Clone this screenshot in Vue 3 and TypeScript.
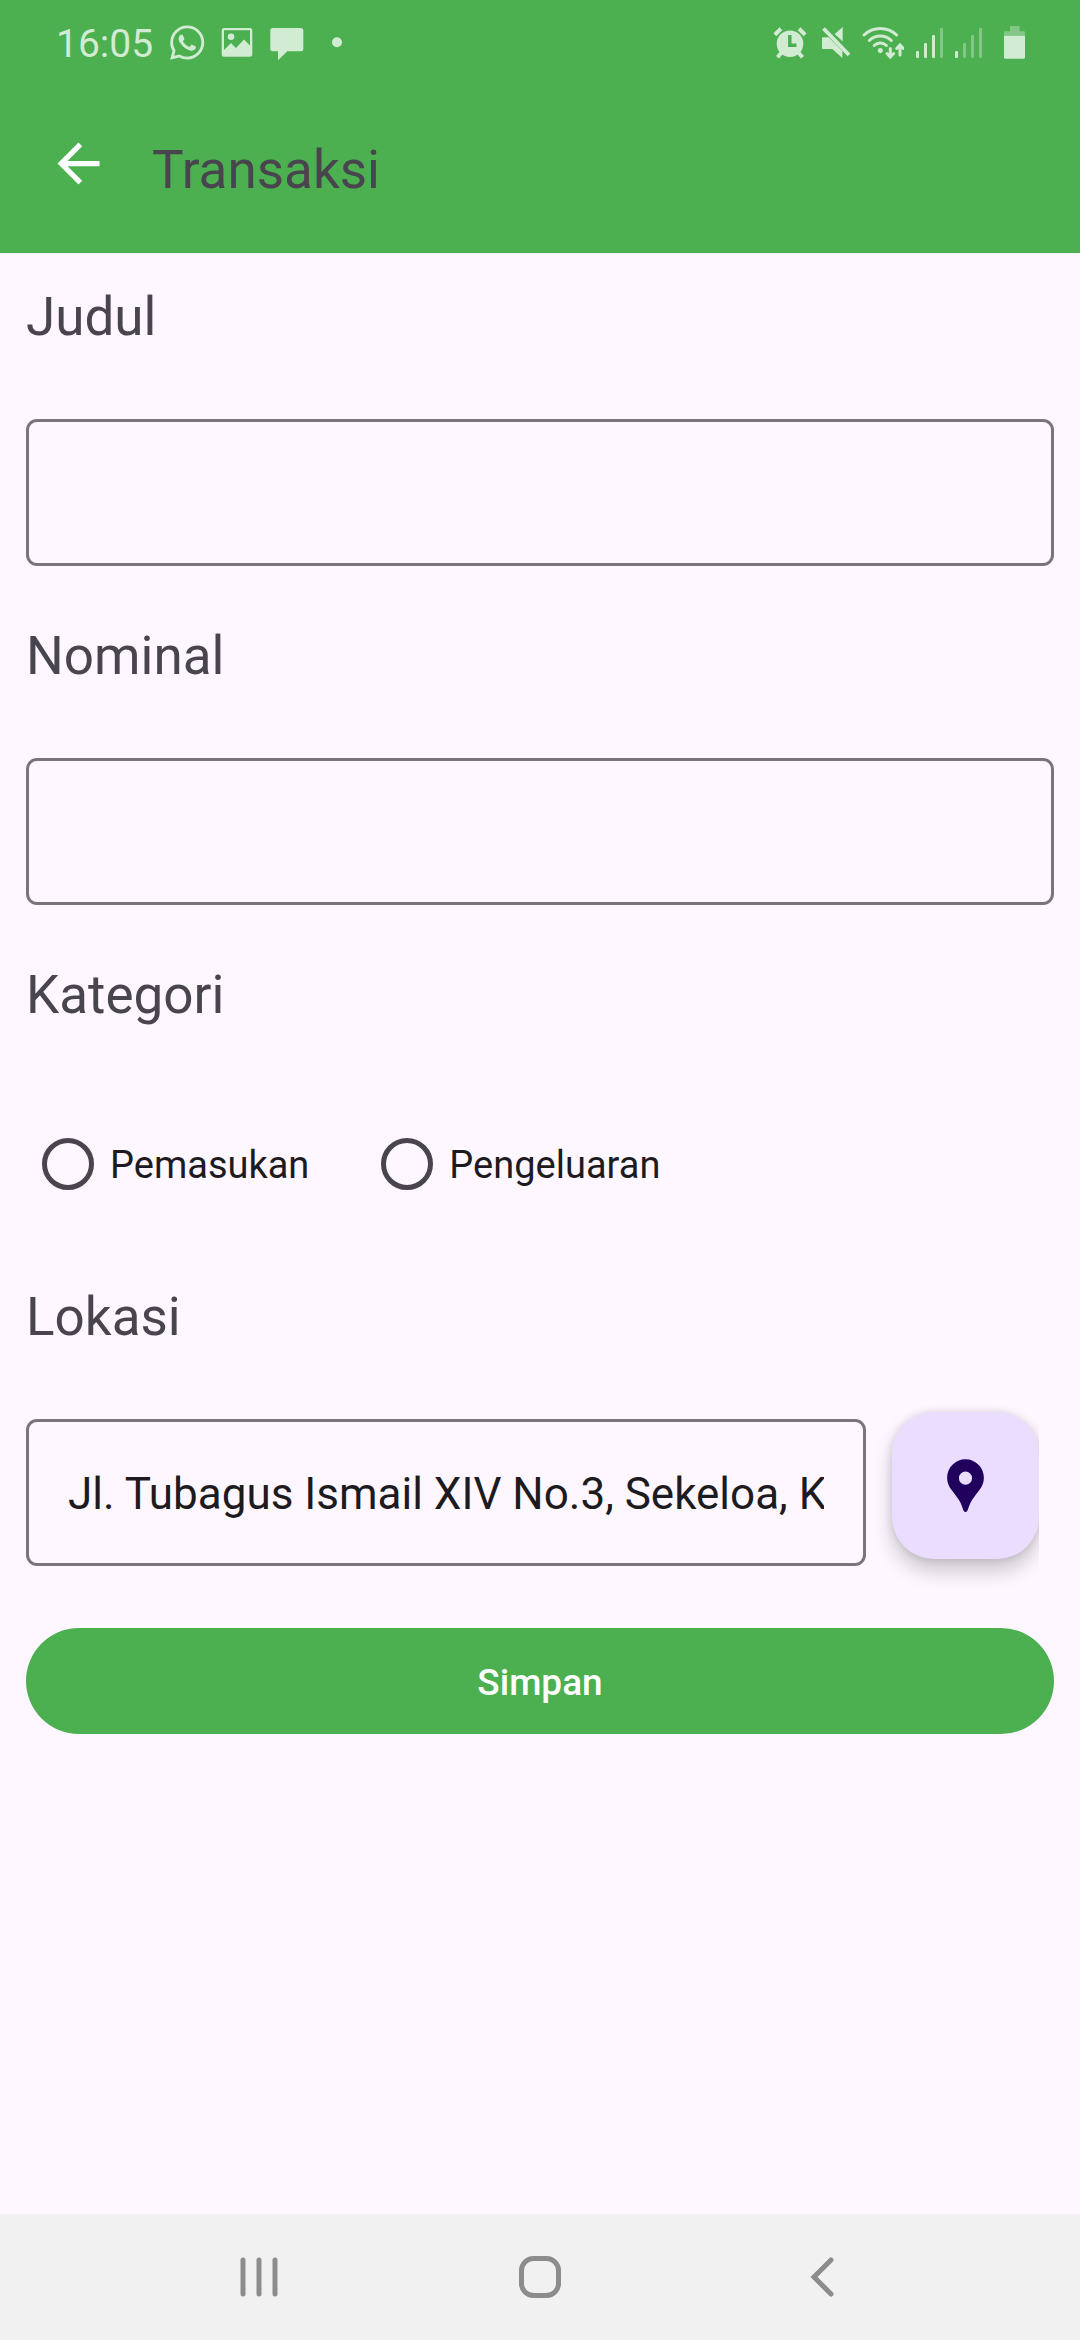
<script setup lang="ts">
import { ref } from 'vue'

type Category = 'pemasukan' | 'pengeluaran'

const title = ref('')
const amount = ref('')
const category = ref<Category | null>(null)
const location = ref('Jl. Tubagus Ismail XIV No.3, Sekeloa, K')

const categories: { value: Category; label: string }[] = [
  { value: 'pemasukan', label: 'Pemasukan' },
  { value: 'pengeluaran', label: 'Pengeluaran' },
]

const signalBars = [
  { x: 0, y: 29 },
  { x: 8, y: 21 },
  { x: 16, y: 13 },
  { x: 24, y: 6 },
]
const signalLevels = [3, 1]
</script>

<template>
  <div class="screen">
    <header class="header">
      <div class="status">
        <span class="clock">16:05</span>
        <svg width="36" height="40" viewBox="0 0 36 40" aria-hidden="true">
          <path
            transform="translate(1 3.5) scale(1.43)"
            d="M17.472 14.382c-.297-.149-1.758-.867-2.03-.967-.273-.099-.471-.148-.67.15-.197.297-.767.966-.94 1.164-.173.199-.347.223-.644.075-.297-.15-1.255-.463-2.39-1.475-.883-.788-1.48-1.761-1.653-2.059-.173-.297-.018-.458.13-.606.134-.133.298-.347.446-.52.149-.174.198-.298.298-.497.099-.198.05-.371-.025-.52-.075-.149-.669-1.612-.916-2.207-.242-.579-.487-.5-.669-.51-.173-.008-.371-.01-.57-.01-.198 0-.52.074-.792.372-.272.297-1.04 1.016-1.04 2.479 0 1.462 1.065 2.875 1.213 3.074.149.198 2.096 3.2 5.077 4.487.709.306 1.262.489 1.694.625.712.227 1.36.195 1.871.118.571-.085 1.758-.719 2.006-1.413.248-.694.248-1.289.173-1.413-.074-.124-.272-.198-.57-.347m-5.421 7.403h-.004a9.87 9.87 0 01-5.031-1.378l-.361-.214-3.741.982.998-3.648-.235-.374a9.86 9.86 0 01-1.51-5.26c.001-5.45 4.436-9.884 9.888-9.884 2.64 0 5.122 1.03 6.988 2.898a9.825 9.825 0 012.893 6.994c-.003 5.45-4.437 9.884-9.885 9.884m8.413-18.297A11.815 11.815 0 0012.05 0C5.495 0 .16 5.335.157 11.892c0 2.096.547 4.142 1.588 5.945L.057 24l6.305-1.654a11.882 11.882 0 005.683 1.448h.005c6.554 0 11.89-5.335 11.893-11.893a11.821 11.821 0 00-3.48-8.413Z"
          />
        </svg>
        <svg width="32" height="40" viewBox="0 0 32 40" aria-hidden="true">
          <path
            fill-rule="evenodd"
            d="M3.2 6h25.6a2.5 2.5 0 0 1 2.5 2.5v23.7a2.5 2.5 0 0 1-2.5 2.5H3.2a2.5 2.5 0 0 1-2.5-2.5V8.5a2.5 2.5 0 0 1 2.5-2.5zM3 8.3V28l7-7 5 5 8-8.5 6 6V8.3z"
          />
          <circle cx="10" cy="14.7" r="3.3" />
        </svg>
        <svg width="36" height="40" viewBox="0 0 36 40" aria-hidden="true">
          <path
            d="M3.8 6h28a2.5 2.5 0 0 1 2.5 2.5v18.3a2.5 2.5 0 0 1-2.5 2.5H18.3L9 38.3v-9H3.8a2.5 2.5 0 0 1-2.5-2.5V8.5A2.5 2.5 0 0 1 3.8 6z"
          />
        </svg>
        <svg width="32" height="40" viewBox="0 0 32 40" aria-hidden="true">
          <circle cx="16" cy="20.3" r="5" />
        </svg>

        <div class="system">
          <svg width="36" height="40" viewBox="0 0 36 40" aria-hidden="true">
            <circle cx="18" cy="21.7" r="13.3" />
            <path class="line" d="M2.8 12.8 9 6.8M27 6.8l6.2 6M5.5 35.2 10 30M30.5 35.2 26 30" stroke-width="4" />
            <path class="cut" d="M17.8 13v10.2h6.7" stroke-width="3.5" />
          </svg>
          <svg width="30" height="40" viewBox="0 0 30 40" aria-hidden="true">
            <path d="M3 15.3h5.7L22.3 29v7L12.3 27H3a1 1 0 0 1-1-1v-9.7a1 1 0 0 1 1-1z" />
            <path d="M14.7 12 22.7 5v14.5z" />
            <path class="line" d="M3.5 6.5 29 33" stroke-width="3.8" />
          </svg>
          <svg width="42" height="40" viewBox="0 0 42 40" aria-hidden="true">
            <g class="line round" stroke-width="3">
              <path d="M2 13a23.8 23.8 0 0 1 32.6 0" />
              <path d="M7.3 18.5a16 16 0 0 1 22 0" />
              <path d="M12.2 23.5a9 9 0 0 1 12.2 0" />
              <path d="M28.3 26.5v8M25 31.5l3.3 3.5 3.3-3.5M38 33v-9M34.7 26.5 38 23l3.3 3.5" />
            </g>
            <circle cx="18.3" cy="28.5" r="2.5" />
          </svg>
          <svg
            v-for="(level, n) in signalLevels"
            :key="n"
            width="27"
            height="40"
            viewBox="0 0 27 40"
            aria-hidden="true"
          >
            <rect
              v-for="(bar, i) in signalBars"
              :key="i"
              :class="{ dim: i >= level }"
              :x="bar.x"
              :y="bar.y"
              width="3"
              :height="36 - bar.y"
              rx="1"
            />
          </svg>
          <svg class="battery" width="22" height="40" viewBox="0 0 22 40" aria-hidden="true">
            <path class="dim" d="M6 4h9.5v5.3H20a1 1 0 0 1 1 1v3.4H0v-3.4a1 1 0 0 1 1-1h5z" />
            <path d="M0 13.7h21v21.5a1.5 1.5 0 0 1-1.5 1.5h-18A1.5 1.5 0 0 1 0 35.2z" />
          </svg>
        </div>
      </div>

      <div class="toolbar">
        <button class="back" type="button" aria-label="Kembali">
          <svg width="63" height="63" viewBox="0 0 24 24" aria-hidden="true">
            <path d="M20 11H7.83l5.59-5.59L12 4l-8 8 8 8 1.41-1.41L7.83 13H20v-2z" />
          </svg>
        </button>
        <h1 class="heading">Transaksi</h1>
      </div>
    </header>

    <form class="form" @submit.prevent>
      <label class="label" for="judul">Judul</label>
      <div class="control">
        <input id="judul" v-model="title" class="field" type="text" />
      </div>

      <label class="label" for="nominal">Nominal</label>
      <div class="control">
        <input id="nominal" v-model="amount" class="field" type="text" inputmode="numeric" />
      </div>

      <fieldset class="group">
        <legend class="label">Kategori</legend>
        <div class="options">
          <label v-for="item in categories" :key="item.value" class="option">
            <input v-model="category" class="radio" type="radio" name="kategori" :value="item.value" />
            <span class="option-text">{{ item.label }}</span>
          </label>
        </div>
      </fieldset>

      <label class="label" for="lokasi">Lokasi</label>
      <div class="location">
        <div class="control">
          <input id="lokasi" v-model="location" class="field" type="text" />
        </div>
        <div class="fab-slot">
          <button class="fab" type="button" aria-label="Pilih lokasi">
            <svg width="63" height="63" viewBox="0 0 24 24" aria-hidden="true">
              <path
                fill-rule="evenodd"
                d="M12 2C8.13 2 5 5.13 5 9c0 1.8.65 3.35 1.7 4.7 1.25 1.7 2.6 3.2 3.4 4.9.4.85.65 1.6.9 2.3.2.6.45 1.2 1 1.2s.8-.6 1-1.2c.25-.7.5-1.45.9-2.3.8-1.7 2.15-3.2 3.4-4.9C18.35 12.35 19 10.8 19 9c0-3.87-3.13-7-7-7zm0 9.7a2.5 2.5 0 1 1 0-5 2.5 2.5 0 0 1 0 5z"
              />
            </svg>
          </button>
        </div>
      </div>

      <button class="submit" type="submit">Simpan</button>
    </form>

    <nav class="navbar" aria-label="Navigasi sistem">
      <button type="button" aria-label="Aplikasi terbaru">
        <svg width="48" height="48" viewBox="0 0 48 48" aria-hidden="true">
          <path d="M8 7v34M24 7v34M40 7v34" />
        </svg>
      </button>
      <button type="button" aria-label="Beranda">
        <svg width="48" height="48" viewBox="0 0 48 48" aria-hidden="true">
          <rect x="5.5" y="5.5" width="37" height="37" rx="12" />
        </svg>
      </button>
      <button type="button" aria-label="Kembali">
        <svg width="48" height="48" viewBox="0 0 48 48" aria-hidden="true">
          <path d="M34 7 17 24l17 17" />
        </svg>
      </button>
    </nav>
  </div>
</template>

<style>
body {
  margin: 0;
  background: #fef7ff;
}
</style>

<style scoped>
.screen {
  display: flex;
  flex-direction: column;
  min-height: 100vh;
  font-family: Roboto, sans-serif;
  color: #1d1b20;
  background: #fef7ff;
}

button {
  padding: 0;
  border: 0;
  background: none;
  font-family: inherit;
  cursor: pointer;
}

svg {
  display: block;
  flex: none;
}

.header {
  padding-bottom: 52px;
  background: #4caf50;
}

.status {
  display: flex;
  align-items: center;
  gap: 16px;
  height: 84px;
  padding: 0 54px 0 56px;
  color: #d2ebd3;
  fill: #d2ebd3;
}

.clock {
  padding-top: 4px;
  font-size: 39px;
  line-height: 46px;
}

.system {
  display: flex;
  gap: 12px;
  margin-left: auto;
}

.battery {
  margin-left: 10px;
}

.line {
  fill: none;
  stroke: #d2ebd3;
}

.round {
  stroke-linecap: round;
}

.cut {
  fill: none;
  stroke: #4caf50;
}

.dim {
  fill: #82c785;
}

.toolbar {
  display: flex;
  align-items: center;
  gap: 42px;
  padding: 41px 47px 0;
}

.back {
  fill: #fff;
}

.heading {
  margin: 0;
  padding-top: 14px;
  font-size: 53px;
  font-weight: 400;
  line-height: 62px;
  color: #49454f;
}

.form {
  display: flex;
  flex-direction: column;
  padding: 33px 26px;
}

.label {
  padding: 0;
  font-size: 53px;
  line-height: 62px;
  color: #49454f;
}

.control {
  margin: 64px 0 59px;
  padding-top: 7px;
}

.field {
  box-sizing: border-box;
  display: block;
  width: 100%;
  height: 147px;
  padding: 2px 39px 0;
  border: 3px solid #79747e;
  border-radius: 11px;
  background: transparent;
  font-family: inherit;
  font-size: 44px;
  color: #1d1b20;
}

.group {
  min-width: 0;
  margin: 0;
  padding: 0;
  border: 0;
}

.options {
  display: flex;
  gap: 72px;
  margin: 75px 0 59px;
  padding: 0 16px;
}

.option {
  display: flex;
  align-items: center;
  gap: 16px;
  height: 126px;
}

.option-text {
  padding-top: 2px;
  font-size: 38px;
  line-height: 44px;
}

.radio {
  appearance: none;
  box-sizing: border-box;
  width: 52px;
  height: 52px;
  margin: 0;
  border: 5px solid #49454f;
  border-radius: 50%;
}

.radio:checked {
  background: radial-gradient(#4caf50 50%, transparent 54%);
}

.location {
  display: flex;
  gap: 26px;
  margin: 64px 0 62px;
}

.location .control {
  flex: 1;
  min-width: 0;
  margin: 0;
}

.fab-slot {
  margin-right: 15px;
  clip-path: inset(-60px 0 -60px -60px);
}

.fab {
  display: grid;
  place-items: center;
  width: 147px;
  height: 147px;
  border-radius: 42px;
  background: #eaddff;
  fill: #21005d;
  box-shadow: 0 12px 20px rgba(0, 0, 0, 0.2), 0 0 8px rgba(0, 0, 0, 0.12);
}

.submit {
  height: 106px;
  padding-top: 2px;
  border-radius: 53px;
  background: #4caf50;
  font-size: 37px;
  font-weight: 500;
  color: #fff;
}

.navbar {
  display: flex;
  justify-content: center;
  height: 126px;
  margin-top: auto;
  background: #f1f1f1;
}

.navbar button {
  display: grid;
  place-items: center;
  width: 26%;
}

.navbar svg {
  fill: none;
  stroke: #8c8c8c;
  stroke-width: 5;
  stroke-linecap: round;
}
</style>
